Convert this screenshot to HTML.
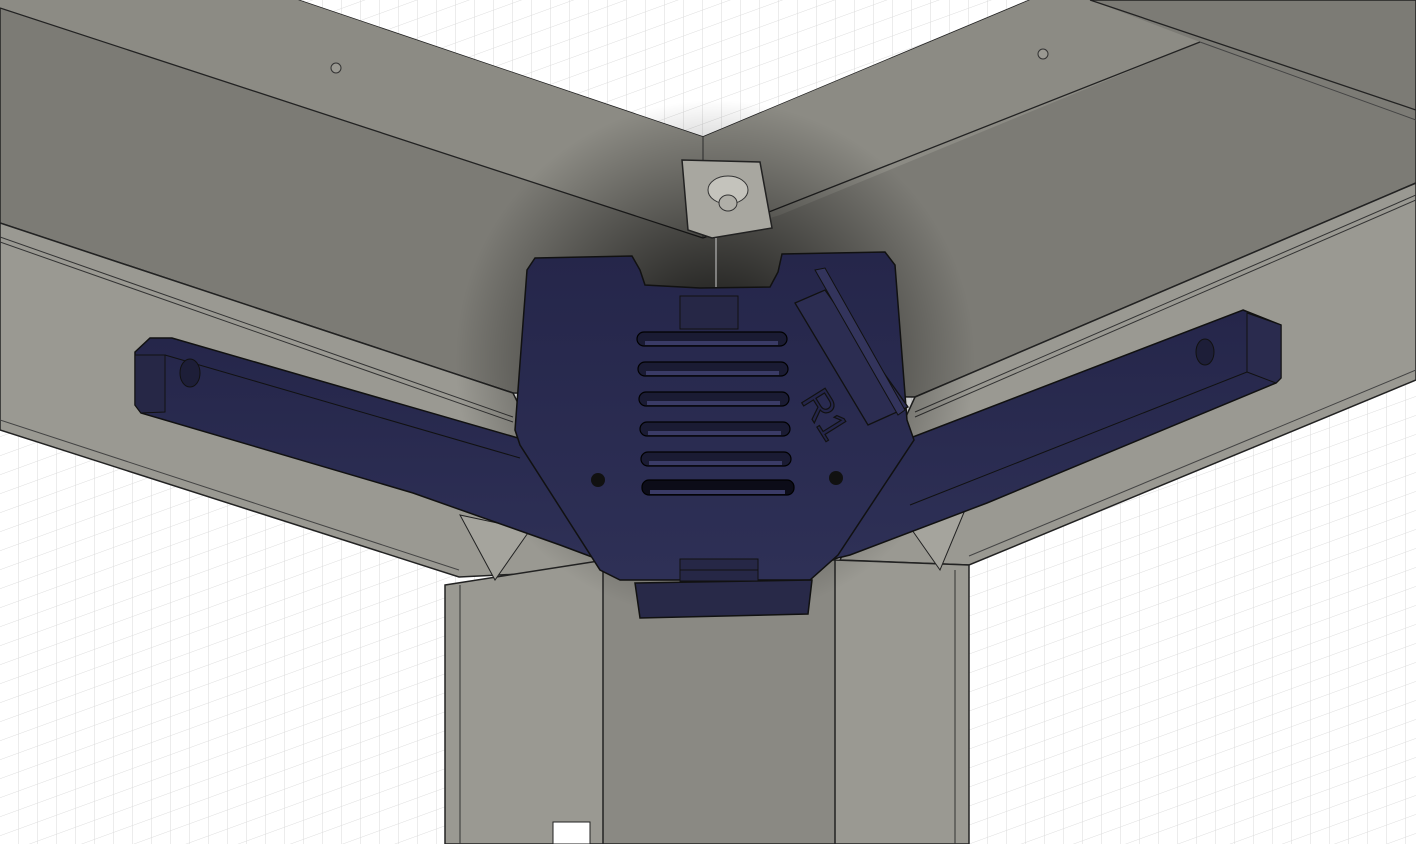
<!DOCTYPE html>
<html><head><style>
html,body{margin:0;padding:0;width:1416px;height:844px;overflow:hidden;background:#fff}
svg{display:block}
</style></head><body>
<svg width="1416" height="844" viewBox="0 0 1416 844" xmlns="http://www.w3.org/2000/svg">
<defs>
<pattern id="g" width="19" height="19" patternUnits="userSpaceOnUse" patternTransform="skewY(-20)">
<path d="M19 0V19M0 19H19" stroke="#dcdcdc" stroke-width="1" fill="none"/>
</pattern>
<pattern id="g2" width="19" height="19" patternUnits="userSpaceOnUse" patternTransform="skewY(20)">
<path d="M19 0V19" stroke="#dcdcdc" stroke-width="1" fill="none"/>
</pattern>
<radialGradient id="sh" cx="715" cy="360" r="260" gradientUnits="userSpaceOnUse">
<stop offset="0" stop-color="#000" stop-opacity="0.9"/>
<stop offset="0.5" stop-color="#000" stop-opacity="0.45"/>
<stop offset="1" stop-color="#000" stop-opacity="0"/>
</radialGradient>
<linearGradient id="nv" x1="0" y1="0" x2="0" y2="1">
<stop offset="0" stop-color="#25264a"/><stop offset="1" stop-color="#2e3056"/>
</linearGradient>
</defs>
<rect width="1416" height="844" fill="#fff"/>
<rect width="1416" height="844" fill="url(#g)"/>
<rect width="1416" height="844" fill="url(#g2)"/>
<!-- top shelves -->
<polygon points="0,0 298,0 703,137 1030,0 1416,0 1416,183 915,397 513,393 0,223" fill="#7c7b75" stroke="#222" stroke-width="1.5"/>
<!-- flange band -->
<polygon points="0,0 298,0 703,137 1030,0 1090,0 1200,42 780,215 703,238 0,8" fill="#8c8b84"/>
<line x1="0" y1="8" x2="703" y2="238" stroke="#222" stroke-width="1.3"/>
<line x1="703" y1="238" x2="1200" y2="42" stroke="#222" stroke-width="1.3"/>
<line x1="703" y1="137" x2="703" y2="238" stroke="#333"/>
<line x1="1090" y1="0" x2="1416" y2="110" stroke="#222" stroke-width="1.3"/>
<line x1="1200" y1="42" x2="1416" y2="120" stroke="#444"/>
<circle cx="336" cy="68" r="5" fill="#9a9992" stroke="#333"/>
<circle cx="1043" cy="54" r="5" fill="#9a9992" stroke="#333"/>
<!-- left beam front -->
<polygon points="0,223 513,393 600,570 459,577 0,430" fill="#9a9992" stroke="#222" stroke-width="1.5"/>
<line x1="0" y1="237" x2="513" y2="417" stroke="#333"/>
<line x1="0" y1="242" x2="513" y2="422" stroke="#333"/>
<line x1="0" y1="420" x2="459" y2="570" stroke="#444"/>
<!-- right beam front -->
<polygon points="1416,183 915,397 840,560 969,565 1416,380" fill="#9a9992" stroke="#222" stroke-width="1.5"/>
<line x1="1416" y1="195" x2="915" y2="412" stroke="#333"/>
<line x1="1416" y1="200" x2="915" y2="417" stroke="#333"/>
<line x1="1416" y1="370" x2="969" y2="556" stroke="#444"/>
<!-- post -->
<polygon points="445,585 605,560 835,560 969,565 969,844 445,844" fill="#9a9992" stroke="#222" stroke-width="1.5"/>
<rect x="603" y="560" width="232" height="284" fill="#8a8983" stroke="#222" stroke-width="1.5"/>
<line x1="460" y1="585" x2="460" y2="844" stroke="#333"/>
<line x1="955" y1="570" x2="955" y2="844" stroke="#333"/>
<rect x="553" y="822" width="37" height="22" fill="#fff" stroke="#222"/>
<!-- shadow -->
<rect width="1416" height="844" fill="url(#sh)"/>
<!-- clip -->
<polygon points="682,160 760,162 772,228 712,238 688,230" fill="#a8a7a0" stroke="#222" stroke-width="1.5"/>
<ellipse cx="728" cy="190" rx="20" ry="14" fill="#c4c3bc" stroke="#333"/>
<ellipse cx="728" cy="203" rx="9" ry="8" fill="#b0afa8" stroke="#333"/>
<line x1="716" y1="238" x2="716" y2="290" stroke="#ccc"/>
<!-- feet -->
<polygon points="460,515 530,530 495,580" fill="#a5a49d" stroke="#222"/>
<polygon points="905,520 965,510 940,570" fill="#a5a49d" stroke="#222"/>
<!-- left arm -->
<polygon points="135,352 150,338 172,338 525,440 600,560 560,545 413,493 141,413 135,405" fill="url(#nv)" stroke="#111" stroke-width="1.5"/>
<polygon points="135,355 165,355 165,412 141,413 135,405" fill="#262746" stroke="#111"/>
<line x1="165" y1="355" x2="520" y2="458" stroke="#111"/>
<ellipse cx="190" cy="373" rx="10" ry="14" fill="#1d1e38" stroke="#111"/>
<!-- right arm -->
<polygon points="1243,310 1281,325 1281,378 1276,383 987,503 850,555 830,560 905,440" fill="url(#nv)" stroke="#111" stroke-width="1.5"/>
<polygon points="1247,313 1281,325 1281,378 1276,383 1247,372" fill="#2a2b4e" stroke="#111"/>
<line x1="1247" y1="372" x2="910" y2="505" stroke="#111"/>
<ellipse cx="1205" cy="352" rx="9" ry="13" fill="#1d1e38" stroke="#111"/>
<!-- main plate -->
<polygon points="535,258 632,256 640,270 645,285 700,288 770,287 778,272 782,254 885,252 895,265 907,420 914,440 838,555 810,580 620,580 600,570 520,445 515,430 527,270" fill="url(#nv)" stroke="#111" stroke-width="1.5"/>
<polygon points="635,583 812,580 808,614 640,618" fill="#282948" stroke="#111" stroke-width="1.5"/>
<rect x="680" y="296" width="58" height="33" fill="#262746" stroke="#111"/>
<rect x="680" y="559" width="78" height="22" fill="#262746" stroke="#111"/>
<line x1="680" y1="570" x2="758" y2="570" stroke="#111"/>
<g fill="#1a1b33" stroke="#000" stroke-width="1.2">
<rect x="637" y="332" width="150" height="14" rx="7"/>
<rect x="638" y="362" width="150" height="14" rx="7"/>
<rect x="639" y="392" width="150" height="14" rx="7"/>
<rect x="640" y="422" width="150" height="14" rx="7"/>
<rect x="641" y="452" width="150" height="14" rx="7"/>
<rect x="642" y="480" width="152" height="15" rx="7" fill="#0c0c18"/>
</g>
<g stroke="#3a3b66" stroke-width="4">
<line x1="645" y1="343" x2="778" y2="343"/><line x1="646" y1="373" x2="779" y2="373"/>
<line x1="647" y1="403" x2="780" y2="403"/><line x1="648" y1="433" x2="781" y2="433"/>
<line x1="649" y1="463" x2="782" y2="463"/><line x1="650" y1="492" x2="785" y2="492"/>
</g>
<circle cx="598" cy="480" r="7" fill="#111"/>
<circle cx="836" cy="478" r="7" fill="#111"/>
<!-- rail -->
<polygon points="795,303 825,290 908,407 868,425" fill="#2c2d52" stroke="#111" stroke-width="1.3"/>
<polygon points="815,270 825,268 905,410 898,415" fill="#33345c" stroke="#111"/>
<text x="0" y="0" transform="translate(800,400) rotate(58)" font-family="Liberation Sans, sans-serif" font-size="40" fill="#24254a" stroke="#111" stroke-width="1.2">R1</text>
</svg>
</body></html>
